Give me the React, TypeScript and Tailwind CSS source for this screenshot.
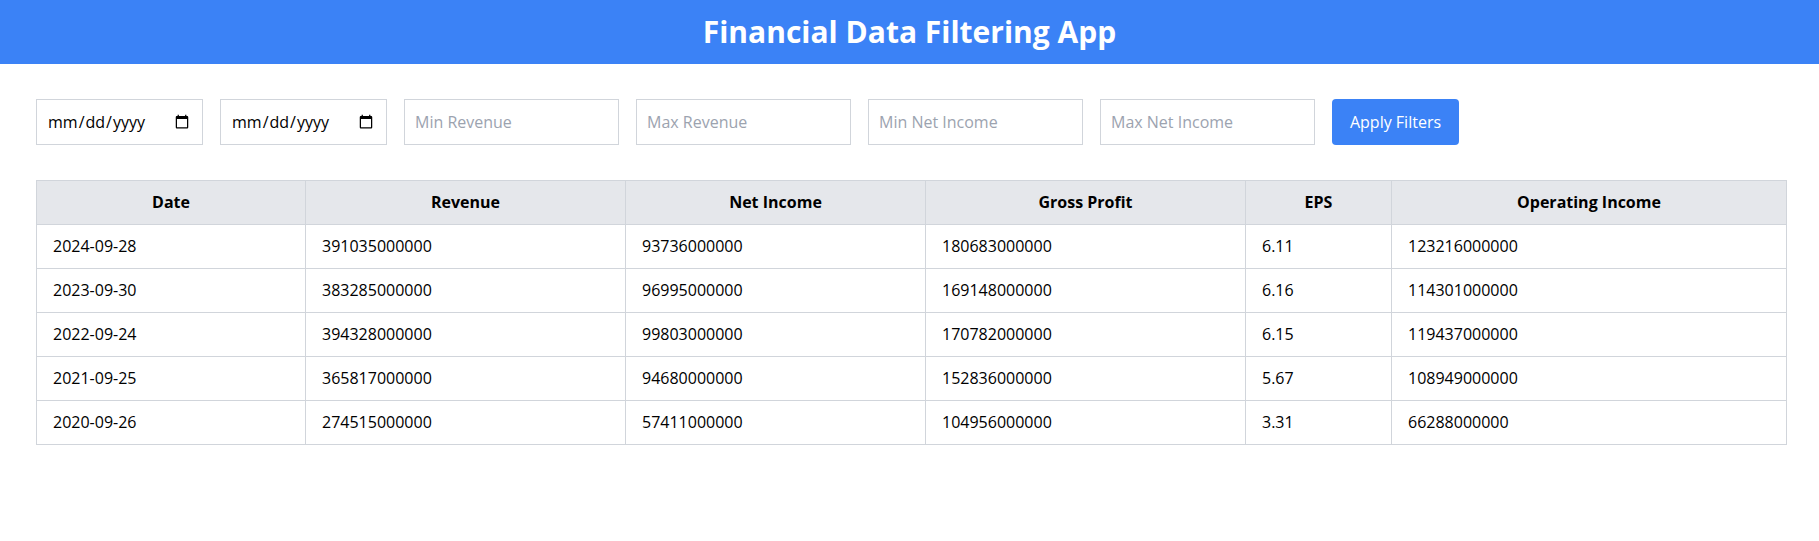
import React, { useState } from "react";

const rows = [
  { date: "2024-09-28", revenue: 391035000000, netIncome: 93736000000, grossProfit: 180683000000, eps: 6.11, operatingIncome: 123216000000 },
  { date: "2023-09-30", revenue: 383285000000, netIncome: 96995000000, grossProfit: 169148000000, eps: 6.16, operatingIncome: 114301000000 },
  { date: "2022-09-24", revenue: 394328000000, netIncome: 99803000000, grossProfit: 170782000000, eps: 6.15, operatingIncome: 119437000000 },
  { date: "2021-09-25", revenue: 365817000000, netIncome: 94680000000, grossProfit: 152836000000, eps: 5.67, operatingIncome: 108949000000 },
  { date: "2020-09-26", revenue: 274515000000, netIncome: 57411000000, grossProfit: 104956000000, eps: 3.31, operatingIncome: 66288000000 },
];

const font = { fontFamily: '"Segoe UI", "Open Sans", "Noto Sans", sans-serif' };

const inputClass =
  "h-[46px] border border-[#d1d5db] px-[10px] text-base text-black placeholder:text-[#9ca3af] bg-white outline-none";
const cellClass = "border border-[#d1d5db] px-4 py-2.5 leading-[23px]";

const App = () => {
  const [filters, setFilters] = useState({ minRev: "", maxRev: "", minNet: "", maxNet: "" });

  return (
    <div className="w-full min-h-[541px] bg-white text-black" style={font}>
      <header className="bg-[#3b82f6] py-[14px] text-center">
        <h1 className="text-3xl leading-9 font-bold text-white">Financial Data Filtering App</h1>
      </header>

      <div className="pl-9 pr-8 pt-[35px]">
        <div className="flex items-center gap-[17px] mb-[35px]">
          <input type="date" className={`${inputClass} w-[167px]`} />
          <input type="date" className={`${inputClass} w-[167px]`} />
          <input
            type="number"
            placeholder="Min Revenue"
            value={filters.minRev}
            onChange={(e) => setFilters({ ...filters, minRev: e.target.value })}
            className={`${inputClass} w-[215px]`}
          />
          <input
            type="number"
            placeholder="Max Revenue"
            value={filters.maxRev}
            onChange={(e) => setFilters({ ...filters, maxRev: e.target.value })}
            className={`${inputClass} w-[215px]`}
          />
          <input
            type="number"
            placeholder="Min Net Income"
            value={filters.minNet}
            onChange={(e) => setFilters({ ...filters, minNet: e.target.value })}
            className={`${inputClass} w-[215px]`}
          />
          <input
            type="number"
            placeholder="Max Net Income"
            value={filters.maxNet}
            onChange={(e) => setFilters({ ...filters, maxNet: e.target.value })}
            className={`${inputClass} w-[215px]`}
          />
          <button className="h-[46px] w-[127px] rounded bg-[#3b82f6] text-white text-base">
            Apply Filters
          </button>
        </div>

        <table className="w-full table-fixed border-collapse border border-[#d1d5db] text-base">
          <colgroup>
            <col className="w-[269px]" />
            <col className="w-[320px]" />
            <col className="w-[300px]" />
            <col className="w-[320px]" />
            <col className="w-[146px]" />
            <col />
          </colgroup>
          <thead>
            <tr className="bg-[#e5e7eb]">
              <th className={`${cellClass} font-bold`}>Date</th>
              <th className={`${cellClass} font-bold`}>Revenue</th>
              <th className={`${cellClass} font-bold`}>Net Income</th>
              <th className={`${cellClass} font-bold`}>Gross Profit</th>
              <th className={`${cellClass} font-bold`}>EPS</th>
              <th className={`${cellClass} font-bold`}>Operating Income</th>
            </tr>
          </thead>
          <tbody>
            {rows.map((r) => (
              <tr key={r.date}>
                <td className={cellClass}>{r.date}</td>
                <td className={cellClass}>{r.revenue}</td>
                <td className={cellClass}>{r.netIncome}</td>
                <td className={cellClass}>{r.grossProfit}</td>
                <td className={cellClass}>{r.eps}</td>
                <td className={cellClass}>{r.operatingIncome}</td>
              </tr>
            ))}
          </tbody>
        </table>
      </div>
    </div>
  );
};

export default App;
